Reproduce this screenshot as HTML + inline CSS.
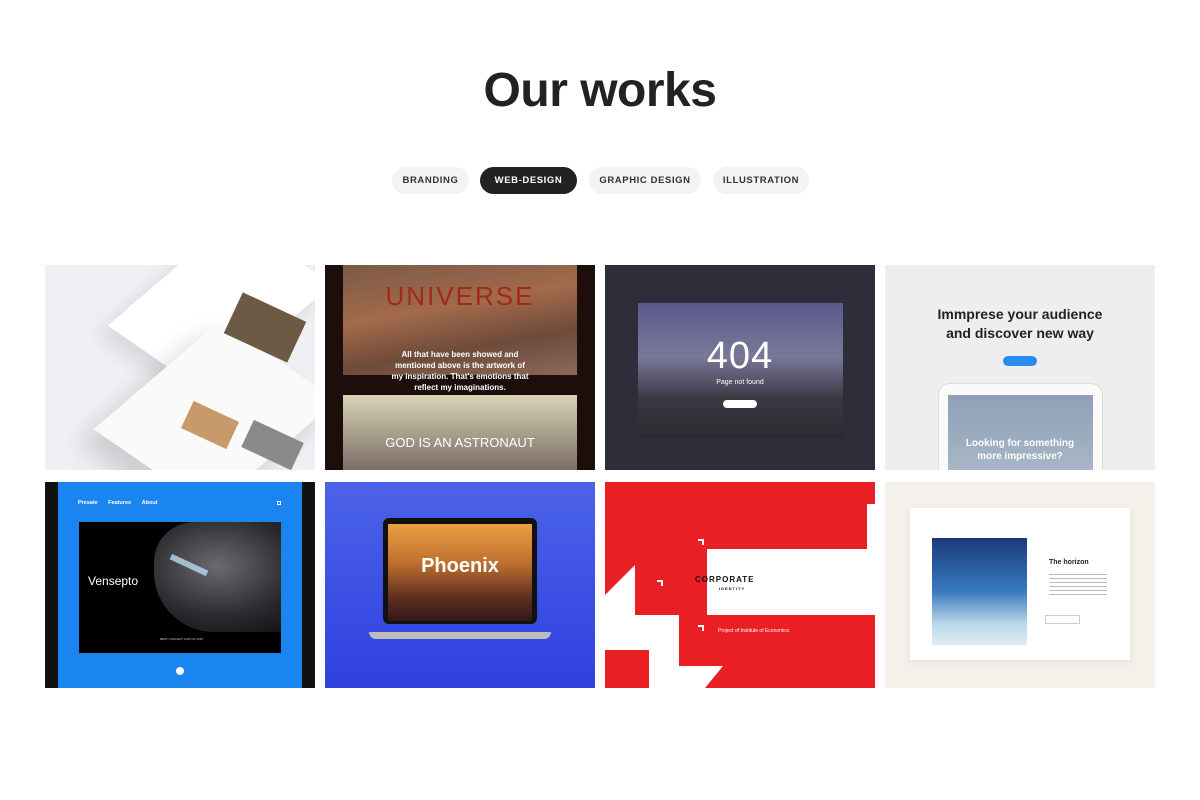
<!DOCTYPE html>
<html><head><meta charset="utf-8"><style>
*{margin:0;padding:0;box-sizing:border-box}
body{width:1200px;height:800px;background:#fff;font-family:"Liberation Sans",sans-serif;position:relative;overflow:hidden}
h1{position:absolute;top:63px;left:0;width:1200px;text-align:center;font-size:48px;font-weight:700;color:#222;letter-spacing:-0.5px}
.tab{position:absolute;top:167px;height:27px;border-radius:14px;background:#f3f3f3;color:#333;font-size:9.5px;font-weight:700;letter-spacing:0.6px;display:flex;align-items:center;justify-content:center}
.tab.on{background:#222;color:#fff}
.t{position:absolute;width:270px;overflow:hidden}
.r1{top:265px;height:205px}.r2{top:482px;height:206px}
.c1{left:45px}.c2{left:325px}.c3{left:605px}.c4{left:885px}
.a{position:absolute}
.ar{position:absolute;width:6px;height:6px;border-top:2px solid #fff;border-right:2px solid #fff}
</style></head><body>
<h1>Our works</h1>
<div class="tab" style="left:392px;width:77px">BRANDING</div>
<div class="tab on" style="left:480px;width:97px">WEB-DESIGN</div>
<div class="tab" style="left:589px;width:112px">GRAPHIC DESIGN</div>
<div class="tab" style="left:713px;width:96px">ILLUSTRATION</div>

<div class="t r1 c1" style="background:#eef0f3">
 <div class="a" style="left:95px;top:-20px;width:160px;height:120px;background:#fff;transform:skewX(-35deg) rotate(25deg);box-shadow:0 10px 20px rgba(0,0,0,.1)"></div>
 <div class="a" style="left:75px;top:90px;width:190px;height:120px;background:#fafafa;transform:skewX(-35deg) rotate(25deg);box-shadow:0 15px 25px rgba(0,0,0,.15)"></div>
 <div class="a" style="left:185px;top:40px;width:70px;height:45px;background:#6c5a44;transform:rotate(25deg)"></div>
 <div class="a" style="left:140px;top:145px;width:50px;height:30px;background:#c89a6a;transform:rotate(25deg)"></div>
 <div class="a" style="left:200px;top:165px;width:55px;height:30px;background:#8a8a8a;transform:rotate(25deg)"></div>
</div>
<div class="t r1 c2" style="background:#1d0e0c">
 <div class="a" style="left:18px;top:0;width:234px;height:110px;background:linear-gradient(170deg,#7b5a48,#a26a4b 40%,#6e4a3a 70%,#8b6a5a)"></div>
 <div class="a" style="left:0;top:16px;width:270px;text-align:center;font-size:26px;color:#a4281a;letter-spacing:2px">UNIVERSE</div>
 <div class="a" style="left:0;top:84px;width:270px;text-align:center;font-size:8px;font-weight:700;color:#fff;line-height:11px">All that have been showed and<br>mentioned above is the artwork of<br>my inspiration. That's emotions that<br>reflect my imaginations.</div>
 <div class="a" style="left:18px;top:130px;width:234px;height:75px;background:linear-gradient(180deg,#d8d4b8,#a9a08c 50%,#7b6d6a)"></div>
 <div class="a" style="left:0;top:170px;width:270px;text-align:center;font-size:13px;color:#fff">GOD IS AN ASTRONAUT</div>
</div>
<div class="t r1 c3" style="background:#2e2d3a">
 <div class="a" style="left:33px;top:38px;width:205px;height:135px;background:linear-gradient(180deg,#5a5a8a,#7a7898 40%,#3a3a45 70%,#2a2a30)"></div>
 <div class="a" style="left:0;top:70px;width:270px;text-align:center;font-size:38px;color:#fff;letter-spacing:1px">404</div>
 <div class="a" style="left:0;top:114px;width:270px;text-align:center;font-size:7px;color:#fff">Page not found</div>
 <div class="a" style="left:118px;top:135px;width:34px;height:8px;border-radius:4px;background:#fff"></div>
</div>
<div class="t r1 c4" style="background:#eeeeee">
 <div class="a" style="left:0;top:40px;width:270px;text-align:center;font-size:14px;font-weight:700;color:#222;line-height:19px">Immprese your audience<br>and discover new way</div>
 <div class="a" style="left:118px;top:91px;width:34px;height:10px;border-radius:5px;background:#2a8cf0"></div>
 <div class="a" style="left:53px;top:118px;width:165px;height:100px;border-radius:12px;background:#fafafa;border:1px solid #ddd"></div>
 <div class="a" style="left:63px;top:130px;width:145px;height:80px;background:linear-gradient(180deg,#8fa0b6,#a8b8c8)"></div>
 <div class="a" style="left:0;top:172px;width:270px;text-align:center;font-size:10px;font-weight:700;color:#fff;line-height:13px">Looking for something<br>more impressive?</div>
</div>

<div class="t r2 c1" style="background:#1a85f0">
 <div class="a" style="left:0;top:0;width:13px;height:206px;background:#111"></div>
 <div class="a" style="left:257px;top:0;width:13px;height:206px;background:#111"></div>
 <div class="a" style="left:33px;top:18px;font-size:5.5px;font-weight:700;color:#fff;word-spacing:2px">Presale&nbsp;&nbsp;&nbsp;Features&nbsp;&nbsp;&nbsp;About</div>
 <div class="a" style="left:232px;top:19px;width:4px;height:4px;border:1px solid #fff"></div>
 <div class="a" style="left:34px;top:40px;width:202px;height:131px;background:#000;overflow:hidden">
  <div class="a" style="left:75px;top:0;width:160px;height:110px;border-radius:40px 0 0 60px;background:radial-gradient(ellipse at 40% 40%,#6a6a70,#2a2a2e 55%,#0a0a0a)"></div>
  <div class="a" style="left:90px;top:40px;width:40px;height:6px;background:#bcd8f0;transform:rotate(25deg);opacity:.8"></div>
 </div>
 <div class="a" style="left:43px;top:92px;font-size:12px;color:#fff">Vensepto</div>
 <div class="a" style="left:115px;top:155px;font-size:3px;color:#ccc">BEST CONCEPT CAR OF 2015</div>
 <div class="a" style="left:131px;top:185px;width:8px;height:8px;border-radius:50%;background:#fff"></div>
</div>
<div class="t r2 c2" style="background:linear-gradient(180deg,#4b63e8,#3040e0)">
 <div class="a" style="left:58px;top:36px;width:154px;height:106px;border-radius:6px;background:#111"></div>
 <div class="a" style="left:63px;top:42px;width:144px;height:97px;background:linear-gradient(180deg,#e8a040,#c07030 40%,#603020 75%,#301818)"></div>
 <div class="a" style="left:0;top:73px;width:270px;text-align:center;font-size:20px;font-weight:700;color:#fff">Phoenix</div>
 <div class="a" style="left:44px;top:150px;width:182px;height:7px;border-radius:0 0 8px 8px;background:#bbb"></div>
</div>
<div class="t r2 c3" style="background:#ea1f24">
 <div class="a" style="left:102px;top:67px;width:168px;height:66px;background:#fff"></div>
 <div class="a" style="left:262px;top:22px;width:8px;height:46px;background:#fff"></div>
 <div class="a" style="left:0;top:0;width:270px;height:206px;background:#fff;clip-path:polygon(0 113px,30px 83px,30px 133px,74px 133px,74px 184px,118px 184px,100px 206px,44px 206px,44px 168px,0 168px)"></div>
 <div class="ar" style="left:93px;top:57px"></div>
 <div class="ar" style="left:52px;top:98px"></div>
 <div class="ar" style="left:93px;top:143px"></div>
 <div class="a" style="left:90px;top:93px;font-size:8px;font-weight:700;letter-spacing:1px;color:#111">CORPORATE</div>
 <div class="a" style="left:114px;top:104px;font-size:4px;font-weight:700;letter-spacing:1px;color:#111">IDENTITY</div>
 <div class="a" style="left:113px;top:146px;font-size:5px;color:#fff">Project of Institute of Economics</div>
</div>
<div class="t r2 c4" style="background:#f4f1ea">
 <div class="a" style="left:25px;top:26px;width:220px;height:152px;background:#fff;box-shadow:0 2px 8px rgba(0,0,0,.08)"></div>
 <div class="a" style="left:47px;top:56px;width:95px;height:107px;background:linear-gradient(180deg,#1a3a7a,#3a7ac0 50%,#b8d8ea 80%,#e0ecf2)"></div>
 <div class="a" style="left:164px;top:77px;font-size:7px;font-weight:700;color:#222">The horizon</div>
 <div class="a" style="left:164px;top:92px;width:58px;height:24px;background:repeating-linear-gradient(180deg,#bbb 0 1px,transparent 1px 4px)"></div>
 <div class="a" style="left:160px;top:133px;width:35px;height:9px;border:1px solid #ccc"></div>
</div>
</body></html>
